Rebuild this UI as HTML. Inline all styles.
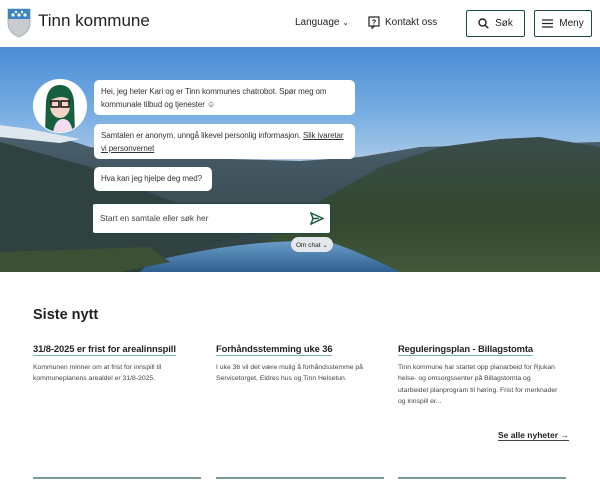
<!DOCTYPE html>
<html><head><meta charset="utf-8"><style>
*{margin:0;padding:0;box-sizing:border-box}
body{width:600px;height:480px;overflow:hidden;background:#fff;font-family:"Liberation Sans",sans-serif;color:#222;position:relative}
.abs{position:absolute}
.btn{position:absolute;top:10px;height:27px;border:1.5px solid #1d4a3e;border-radius:2px;font-size:10px;display:flex;align-items:center;justify-content:center;gap:6px;color:#222}
.hero{top:47px;left:0;width:600px;height:225px;overflow:hidden;background:linear-gradient(180deg,#4b8cd6 0%,#78aee2 30%,#a9c9e6 50%,#c4d6e4 60%)}
.bub{position:absolute;background:#fff;border-radius:5px;font-size:8px;line-height:12.5px;color:#333;padding:6px 7px;letter-spacing:-.1px;white-space:nowrap}
.nt{position:absolute;top:343px;font-size:9.4px;font-weight:bold;color:#222;border-bottom:1.5px solid #7ab8ae;padding-bottom:1px;letter-spacing:-.1px}
.nd{position:absolute;top:362px;font-size:6.8px;line-height:11.3px;color:#444}
.bl{position:absolute;top:477px;height:2px;background:#7a9a94;width:168px}
</style></head><body>
<svg class="abs" style="left:7px;top:8px" width="24" height="30" viewBox="0 0 24 30"><path d="M1 1h22v14c0 8-6 12-11 14C7 27 1 23 1 15z" fill="#c8ccd0" stroke="#9aa" stroke-width=".8"/><path d="M1 1h22v10H1z" fill="#3d84c4"/><g fill="#fff"><circle cx="6" cy="7" r="1.6"/><circle cx="12" cy="7" r="1.6"/><circle cx="18" cy="7" r="1.6"/><circle cx="9" cy="4" r="1.2"/><circle cx="15" cy="4" r="1.2"/></g></svg>
<div class="abs" style="left:38px;top:11px;font-size:17px;color:#222">Tinn kommune</div>
<div class="abs" style="left:295px;top:17px;font-size:10px">Language <span style="font-size:8px">&#8964;</span></div>
<svg class="abs" style="left:368px;top:16px" width="12" height="13" viewBox="0 0 12 13"><rect x="1" y="1" width="10" height="9" fill="none" stroke="#222" stroke-width="1.2"/><path d="M4 10l0 2.5 2.5-2.5" fill="none" stroke="#222"/><text x="6" y="8.3" font-size="7" text-anchor="middle" font-family="Liberation Sans" font-weight="bold">?</text></svg>
<div class="abs" style="left:385px;top:17px;font-size:10px">Kontakt oss</div>
<div class="btn" style="left:466px;width:59px"><svg width="11" height="11" viewBox="0 0 11 11"><circle cx="4.5" cy="4.5" r="3.5" fill="none" stroke="#222" stroke-width="1.4"/><path d="M7 7l3.3 3.3" stroke="#222" stroke-width="1.4"/></svg>Søk</div>
<div class="btn" style="left:534px;width:58px"><svg width="11" height="9" viewBox="0 0 11 9"><path d="M0 1h11M0 4.5h11M0 8h11" stroke="#222" stroke-width="1.3"/></svg>Meny</div>
<div class="abs hero">
<svg class="abs" style="left:0;top:0" width="600" height="225" viewBox="0 0 600 225">
<defs><linearGradient id="m1" x1="0" y1="0" x2="0" y2="1"><stop offset="0" stop-color="#4d6272"/><stop offset="1" stop-color="#2c3d3a"/></linearGradient>
<linearGradient id="m2" x1="0" y1="0" x2="0" y2="1"><stop offset="0" stop-color="#3a4c4a"/><stop offset=".6" stop-color="#33482f"/><stop offset="1" stop-color="#42583a"/></linearGradient>
<linearGradient id="w" x1="0" y1="0" x2="0" y2="1"><stop offset="0" stop-color="#6a9cc8"/><stop offset="1" stop-color="#2f5f90"/></linearGradient></defs>
<path d="M0 78 L40 84 L90 100 L150 108 L230 112 L300 114 L360 110 L420 100 L600 95 L600 225 L0 225Z" fill="url(#m1)"/>
<path d="M0 78 L30 82 L80 92 L60 96 L20 92 L0 90Z" fill="#dfe7ee"/>
<path d="M0 95 L90 120 L160 150 L220 170 L260 185 L200 200 L120 210 L0 215Z" fill="#2f4240"/>
<path d="M260 200 L310 160 L380 120 L440 100 L500 92 L540 90 L600 100 L600 225 L350 225Z" fill="url(#m2)"/>
<path d="M150 215 Q250 190 330 195 Q360 205 400 225 L140 225Z" fill="url(#w)"/>
<path d="M0 205 L150 200 L170 215 L120 225 L0 225Z" fill="#3c5036"/>
</svg>
</div>
<svg class="abs" style="left:33px;top:79px" width="54" height="54" viewBox="0 0 54 54"><circle cx="27" cy="27" r="27" fill="#fff"/><clipPath id="c"><circle cx="27" cy="27" r="26"/></clipPath><g clip-path="url(#c)"><path d="M12 54 L13 22 Q15 6 27 6 Q39 6 41 22 L42 54Z" fill="#15603e"/><ellipse cx="27" cy="27" rx="10" ry="12" fill="#f6d3c7"/><path d="M16 22 Q18 8 27 10 Q36 8 38 22 Q30 14 16 22Z" fill="#15603e"/><rect x="18" y="22" width="8" height="6" fill="none" stroke="#111" stroke-width="1.5"/><rect x="28" y="22" width="8" height="6" fill="none" stroke="#111" stroke-width="1.5"/><path d="M20 54 Q22 40 30 40 Q38 40 40 54Z" fill="#f3dcef"/></g></svg>
<div class="bub" style="left:94px;top:80px;width:261px;height:35px;white-space:normal">Hei, jeg heter Kari og er Tinn kommunes chatrobot. Spør meg om kommunale tilbud og tjenester ☺</div>
<div class="bub" style="left:94px;top:124px;width:261px;height:35px;white-space:normal">Samtalen er anonym, unngå likevel personlig informasjon. <u>Slik ivaretar vi personvernet</u></div>
<div class="bub" style="left:94px;top:167px;width:118px;height:24px">Hva kan jeg hjelpe deg med?</div>
<div class="abs" style="left:92px;top:203px;width:239px;height:31px;background:#fff;border:1.5px solid #1d4a3e;border-radius:3px;font-size:8.3px;color:#444;padding:9px 7px">Start en samtale eller søk her
<svg class="abs" style="right:6px;top:8px" width="14" height="13" viewBox="0 0 14 13"><path d="M1 1L13 6.5 1 12 3 6.5Z M3 6.5h6" fill="none" stroke="#1d5a40" stroke-width="1.5"/></svg></div>
<div class="abs" style="left:291px;top:237px;width:42px;height:15px;background:#e4e8ec;border-radius:8px;font-size:6.5px;padding:4px 5px;color:#222;white-space:nowrap">Om chat &#8964;</div>
<div class="abs" style="left:33px;top:307px;font-size:14.5px;font-weight:bold">Siste nytt</div>
<div class="nt" style="left:33px">31/8-2025 er frist for arealinnspill</div>
<div class="nt" style="left:216px">Forhåndsstemming uke 36</div>
<div class="nt" style="left:398px">Reguleringsplan - Billagstomta</div>
<div class="nd" style="left:33px;width:165px">Kommunen minner om at frist for innspill til kommuneplanens arealdel er 31/8-2025.</div>
<div class="nd" style="left:216px;width:165px">I uke 36 vil det være mulig å forhåndsstemme på Servicetorget, Eldres hus og Tinn Helsetun.</div>
<div class="nd" style="left:398px;width:162px">Tinn kommune har startet opp planarbeid for Rjukan helse- og omsorgssenter på Billagstomta og utarbeidet planprogram til høring. Frist for merknader og innspill er...</div>
<div class="abs" style="left:498px;top:430px;font-size:8.5px;font-weight:bold;border-bottom:1px solid #444">Se alle nyheter &#8594;</div>
<div class="bl" style="left:33px"></div><div class="bl" style="left:216px"></div><div class="bl" style="left:398px"></div>
</body></html>
